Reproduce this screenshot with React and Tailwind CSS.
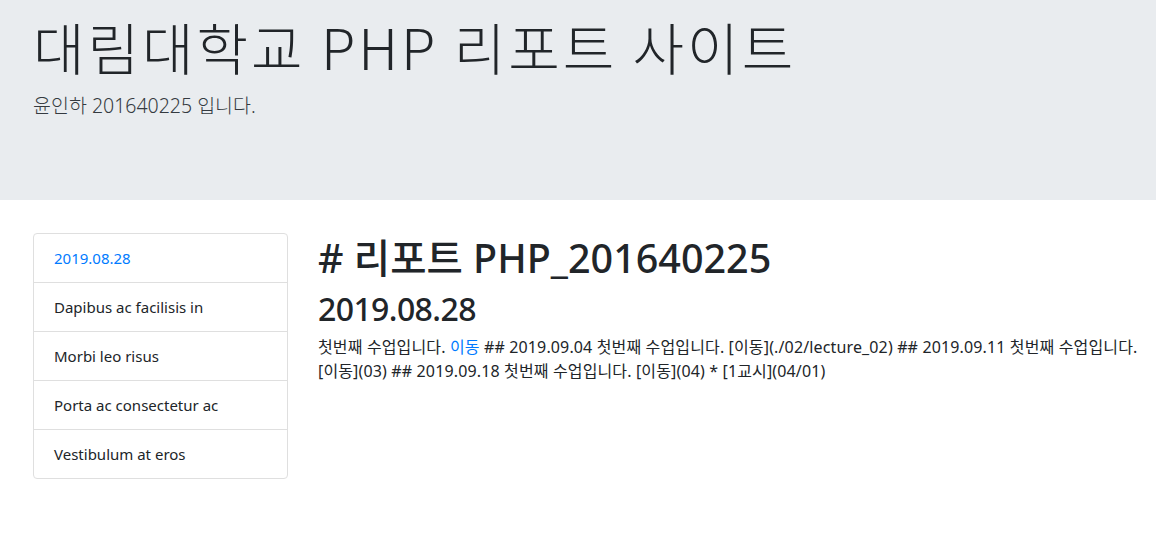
export default function App() {
  const items = ["Dapibus ac facilisis in", "Morbi leo risus", "Porta ac consectetur ac", "Vestibulum at eros"];
  return (
    <div className="min-h-[542px] bg-white text-[#212529] font-['Noto_Sans','Noto_Sans_CJK_KR',sans-serif]">
      <div className="h-[200px] bg-[#e9ecef] px-[33px] pt-[12px]">
        <h1 className="text-[56px] leading-[67px] font-light tracking-[3px] text-[#212529] font-['Noto_Sans_CJK_KR','Noto_Sans',sans-serif]">
          대림대학교 PHP 리포트 사이트
        </h1>
        <p className="mt-[12px] text-[19.5px] leading-[30px] font-light text-[#343a40]">윤인하 201640225 입니다.</p>
      </div>
      <div className="flex gap-[30px] px-[33px] pt-[33px]">
        <div className="w-[255px] shrink-0">
          <ul className="rounded-[4px] border border-[#dfdfdf] text-[15px]">
            <li className="h-[48px] px-[20px] flex items-center text-[#007bff]">2019.08.28</li>
            {items.map((t) => (
              <li key={t} className="h-[49px] px-[20px] flex items-center border-t border-[#dfdfdf]">
                {t}
              </li>
            ))}
          </ul>
        </div>
        <div className="flex-1 min-w-0">
          <h1 className="text-[39.5px] leading-[48px] font-medium mt-[1px]">
            # 리포트 PHP_201640225
          </h1>
          <h2 className="text-[32px] leading-[38px] font-medium tracking-[-0.6px] mt-[8px]">2019.08.28</h2>
          <div className="mt-[7px] text-[16px] leading-[24px] tracking-[0.14px] whitespace-nowrap">
            <div>
              첫번째 수업입니다. <a className="text-[#007bff]">이동</a> ## 2019.09.04 첫번째 수업입니다. [이동](./02/lecture_02) ## 2019.09.11 첫번째 수업입니다.
            </div>
            <div>[이동](03) ## 2019.09.18 첫번째 수업입니다. [이동](04) * [1교시](04/01)</div>
          </div>
        </div>
      </div>
    </div>
  );
}
